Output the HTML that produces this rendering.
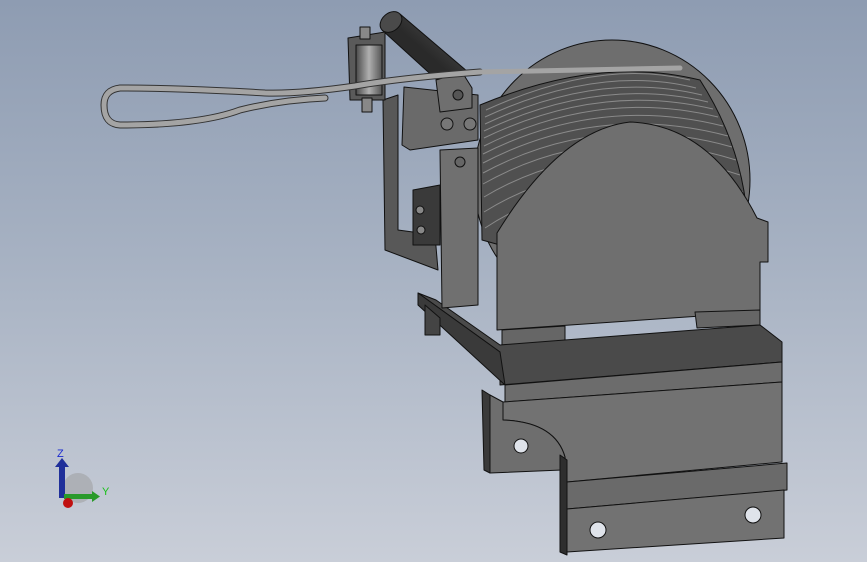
<!DOCTYPE html>
<html><head><meta charset="utf-8"><style>
html,body{margin:0;padding:0;width:867px;height:562px;overflow:hidden}
body{background:linear-gradient(#8e9cb2 0%,#a6b1c2 45%,#c9ced8 100%)}
svg{position:absolute;left:0;top:0}
</style></head><body>
<svg width="867" height="562" viewBox="0 0 867 562" xmlns="http://www.w3.org/2000/svg">
<defs>
<linearGradient id="tube" x1="0" y1="0" x2="1" y2="-1"><stop offset="0" stop-color="#2a2a2a"/><stop offset=".5" stop-color="#5a5a5a"/><stop offset="1" stop-color="#2a2a2a"/></linearGradient>
<linearGradient id="cyl" x1="0" x2="1"><stop offset="0" stop-color="#4a4a4a"/><stop offset=".5" stop-color="#b0b0b0"/><stop offset="1" stop-color="#555"/></linearGradient>
</defs>
<g stroke="#111" stroke-width="1" stroke-linejoin="round">
<!-- drum back flange -->
<ellipse cx="612" cy="180" rx="138" ry="140" fill="#6e6e6e"/>
<!-- rope windings -->
<path d="M480 105 Q600 55 700 80 Q745 150 748 230 L500 245 L482 240 Z" fill="#505050"/>
<g fill="none" stroke="#8a8a8a" stroke-width="1">
<path d="M486 110 Q600 58 690 80"/><path d="M485 117 Q600 64 696 88"/><path d="M485 124 Q600 70 702 95"/><path d="M484 131 Q600 76 708 102"/><path d="M484 138 Q600 82 713 109"/><path d="M484 146 Q600 88 718 117"/><path d="M483 154 Q600 95 723 126"/><path d="M483 163 Q600 102 728 136"/><path d="M483 173 Q600 110 732 147"/><path d="M483 184 Q600 118 736 160"/><path d="M484 197 Q600 128 740 175"/><path d="M484 212 Q600 140 743 192"/><path d="M485 228 Q600 152 746 212"/>
</g>
<!-- housing front -->
<path d="M497 233 Q560 130 630 122 Q710 125 757 218 L768 222 L768 262 L760 262 L760 312 L497 330 Z" fill="#6f6f6f"/>
<!-- feet -->
<path d="M502 330 L565 326 L565 342 L502 345 Z" fill="#666"/>
<path d="M695 312 L760 310 L760 325 L697 328 Z" fill="#666"/>
<!-- base plate -->
<path d="M418 293 L500 352 L500 385 L782 362 L782 342 L760 325 L500 345 L436 300 Z" fill="#4a4a4a"/>
<path d="M418 293 L418 305 L505 385 L505 402 L782 382 L782 362 L505 385 L500 352 Z" fill="#3a3a3a"/>
<path d="M505 385 L782 362 L782 382 L505 402 Z" fill="#6c6c6c"/>
<path d="M425 305 L425 335 L440 335 L440 318Z" fill="#444"/>
<!-- lower bracket -->
<path d="M503 402 L782 382 L782 462 L567 482 L565 457 Q555 422 503 420 Z" fill="#727272"/>
<path d="M490 395 L503 402 L503 420 Q555 422 565 457 L562 470 L490 473 Z" fill="#6e6e6e"/>
<path d="M482 390 L490 395 L490 473 L484 470 Z" fill="#3a3a3a"/>
<path d="M567 482 L787 463 L787 490 L567 509 Z" fill="#6a6a6a"/>
<path d="M567 509 L784 490 L784 538 L567 552 Z" fill="#727272"/>
<path d="M560 455 L567 460 L567 555 L560 552 Z" fill="#2e2e2e"/>
<circle cx="521" cy="446" r="7" fill="#dfe3ea"/><circle cx="598" cy="530" r="8" fill="#dfe3ea"/><circle cx="753" cy="515" r="8" fill="#dfe3ea"/>
<!-- left bracket -->
<path d="M383 100 L398 95 L398 230 L435 235 L438 270 L385 250 Z" fill="#585858"/>
<path d="M413 190 L440 185 L440 245 L413 245 Z" fill="#3a3a3a"/>
<circle cx="420" cy="210" r="4" fill="#888"/><circle cx="421" cy="230" r="4" fill="#888"/>
<!-- lever plate -->
<path d="M440 150 L478 148 L478 305 L442 308 Z" fill="#707070"/>
<!-- tube -->
<path d="M382 30 L400 14 L468 72 L448 90 Z" fill="url(#tube)"/>
<ellipse cx="391" cy="22" rx="12" ry="9" transform="rotate(-40 391 22)" fill="#4a4a4a"/>
<!-- clamp block -->
<path d="M404 87 L478 95 L478 140 L410 150 L402 145 Z" fill="#6a6a6a"/>
<path d="M436 80 L462 72 L472 88 L472 108 L440 112 Z" fill="#6f6f6f"/>
<circle cx="458" cy="95" r="5" fill="#555"/><circle cx="447" cy="124" r="6" fill="#777"/><circle cx="470" cy="124" r="6" fill="#777"/><circle cx="460" cy="162" r="5" fill="#666"/>
<!-- left clamp -->
<path d="M348 38 L385 32 L385 100 L350 100 Z" fill="#5a5a5a"/>
<rect x="356" y="45" width="26" height="50" fill="url(#cyl)"/>
<rect x="360" y="27" width="10" height="12" fill="#888"/><rect x="362" y="98" width="10" height="14" fill="#888"/>
</g>
<!-- cable -->
<g fill="none" stroke-linecap="round">
<path d="M480 72 Q400 78 355 86 Q300 94 265 93 Q180 88 120 88 Q104 90 104 105 Q104 124 120 125 Q200 125 240 110 Q280 100 325 98" stroke="#333" stroke-width="7"/>
<path d="M680 68 L480 72 Q400 78 355 86 Q300 94 265 93 Q180 88 120 88 Q104 90 104 105 Q104 124 120 125 Q200 125 240 110 Q280 100 325 98" stroke="#a4a4a4" stroke-width="5"/>
</g>
<!-- triad -->
<circle cx="78" cy="488" r="15" fill="#9a9a9a" opacity=".5"/>
<rect x="59" y="465" width="6" height="33" fill="#1f2f9a"/>
<path d="M55 467 L62 458 L69 467 Z" fill="#1f2f9a"/>
<rect x="64" y="494" width="30" height="5" fill="#2a9a2a"/>
<path d="M92 491 L100 496.5 L92 502 Z" fill="#2a9a2a"/>
<circle cx="68" cy="503" r="5" fill="#c01010"/>
<text x="57" y="457" font-family="Liberation Sans,sans-serif" font-size="11" fill="#1a2ad0">Z</text>
<text x="102" y="495" font-family="Liberation Sans,sans-serif" font-size="11" fill="#1ac01a">Y</text>
</svg>
</body></html>
